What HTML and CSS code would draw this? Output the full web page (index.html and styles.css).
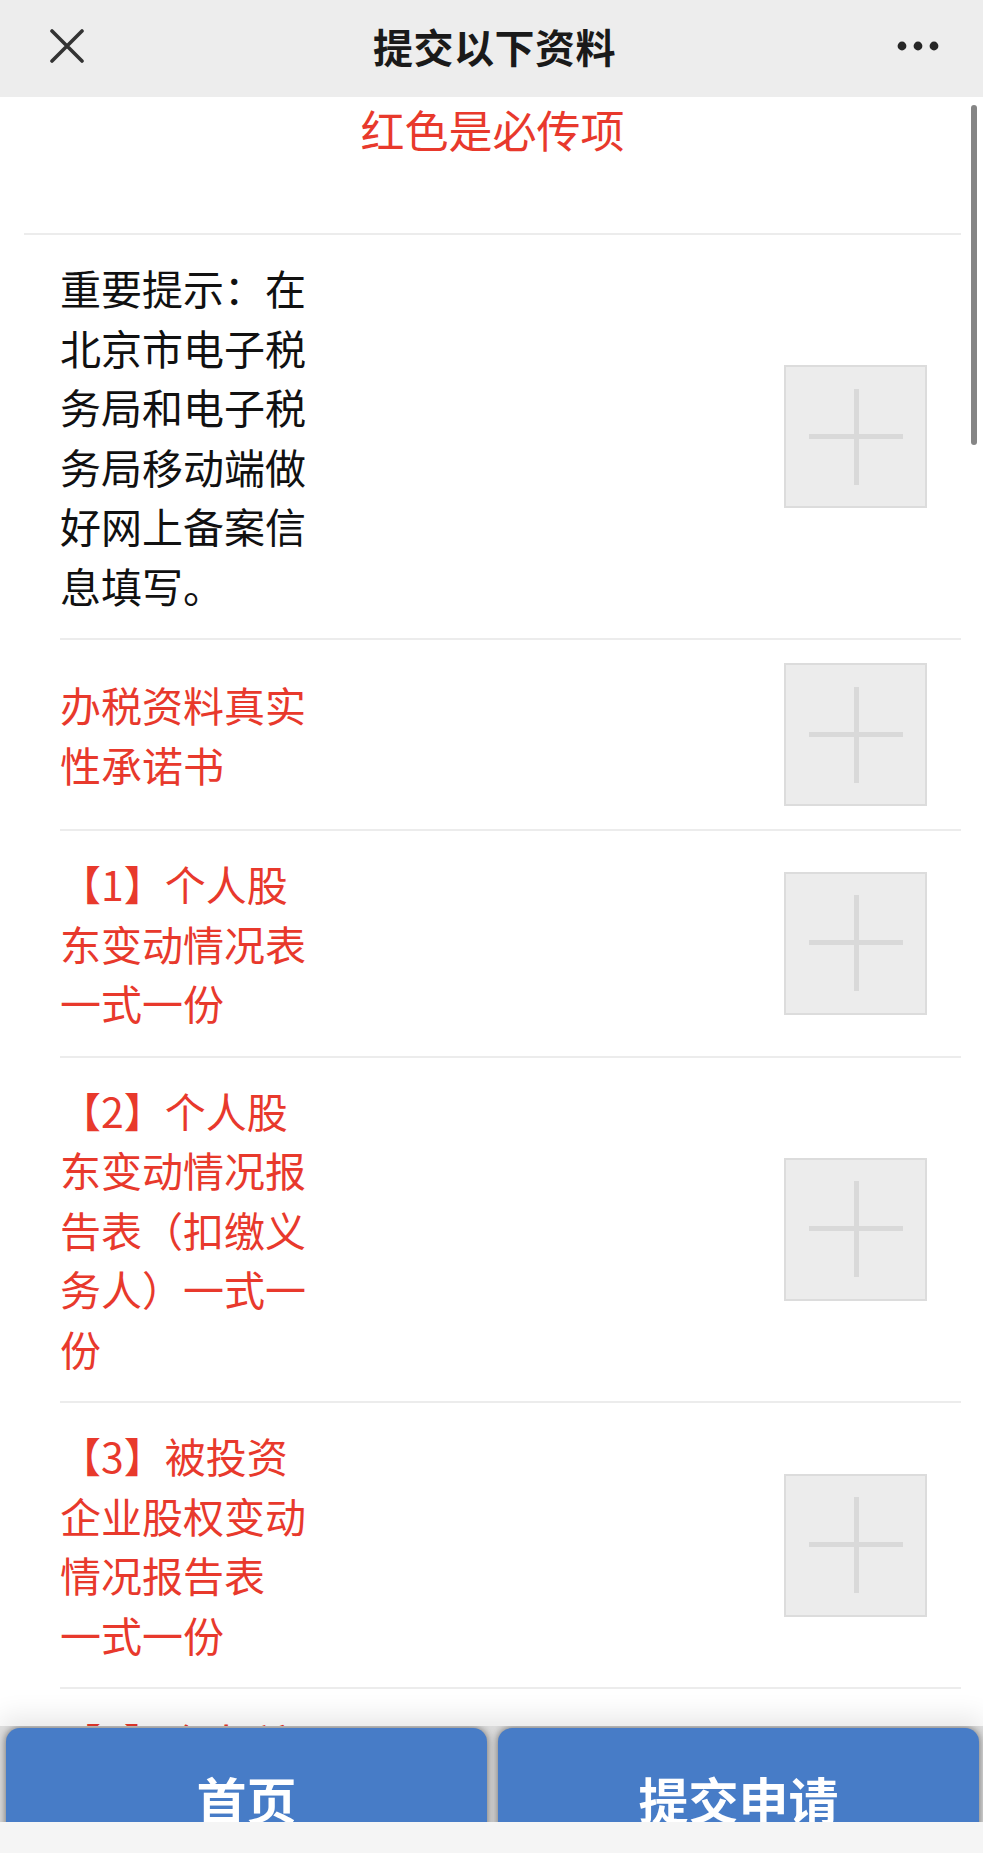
FILE: index.html
```html
<!DOCTYPE html>
<html lang="zh-CN">
<head>
  <meta charset="UTF-8" />
  <meta name="viewport" content="width=device-width, initial-scale=1.0"/>
  <title>提交以下资料</title>
  <link rel="stylesheet" href="styles.css">
</head>
<body>

  <header class="topbar">
    <a class="topbar-close" href="#">
      <svg width="34" height="34" viewBox="0 0 34 34">
        <path d="M2 2 L32 32 M32 2 L2 32" stroke="#333" stroke-width="3.6" stroke-linecap="round" fill="none"/>
      </svg>
    </a>
    <h1 class="topbar-title">提交以下资料</h1>
    <a class="topbar-more" href="#">
      <svg width="42" height="10" viewBox="0 0 42 10">
        <circle cx="5" cy="5" r="4.4" fill="#262626"/>
        <circle cx="21" cy="5" r="4.4" fill="#262626"/>
        <circle cx="37" cy="5" r="4.4" fill="#262626"/>
      </svg>
    </a>
  </header>

  <main class="content">
    <div class="scroll-thumb"></div>
    <div class="page">
      <p class="notice">红色是必传项</p>

      <div class="upload-list">
        <div class="upload-item">
          <div class="upload-label">重要提示：在北京市电子税务局和电子税务局移动端做好网上备案信息填写。</div>
          <div class="upload-box">
            <svg width="94" height="96" viewBox="0 0 94 96"><rect x="0" y="45" width="94" height="5" fill="#d9d9d9"/><rect x="45" y="0" width="5" height="96" fill="#d9d9d9"/></svg>
          </div>
        </div>

        <div class="upload-item">
          <div class="upload-label required">办税资料真实性承诺书</div>
          <div class="upload-box">
            <svg width="94" height="96" viewBox="0 0 94 96"><rect x="0" y="45" width="94" height="5" fill="#d9d9d9"/><rect x="45" y="0" width="5" height="96" fill="#d9d9d9"/></svg>
          </div>
        </div>

        <div class="upload-item">
          <div class="upload-label required">【1】个人股东变动情况表一式一份</div>
          <div class="upload-box">
            <svg width="94" height="96" viewBox="0 0 94 96"><rect x="0" y="45" width="94" height="5" fill="#d9d9d9"/><rect x="45" y="0" width="5" height="96" fill="#d9d9d9"/></svg>
          </div>
        </div>

        <div class="upload-item">
          <div class="upload-label required">【2】个人股东变动情况报告表（扣缴义务人）一式一份</div>
          <div class="upload-box">
            <svg width="94" height="96" viewBox="0 0 94 96"><rect x="0" y="45" width="94" height="5" fill="#d9d9d9"/><rect x="45" y="0" width="5" height="96" fill="#d9d9d9"/></svg>
          </div>
        </div>

        <div class="upload-item">
          <div class="upload-label required">【3】被投资企业股权变动情况报告表<br>一式一份</div>
          <div class="upload-box">
            <svg width="94" height="96" viewBox="0 0 94 96"><rect x="0" y="45" width="94" height="5" fill="#d9d9d9"/><rect x="45" y="0" width="5" height="96" fill="#d9d9d9"/></svg>
          </div>
        </div>

        <div class="upload-item">
          <div class="upload-label required">【4】个人所得税扣缴申报表一式一份</div>
          <div class="upload-box">
            <svg width="94" height="96" viewBox="0 0 94 96"><rect x="0" y="45" width="94" height="5" fill="#d9d9d9"/><rect x="45" y="0" width="5" height="96" fill="#d9d9d9"/></svg>
          </div>
        </div>
      </div>
    </div>
  </main>

  <footer class="bottombar">
    <div class="actions">
      <button class="action-btn">首页</button>
      <button class="action-btn">提交申请</button>
    </div>
    <div class="home-strip"></div>
  </footer>

</body>
</html>
```

FILE: styles.css
```css
html, body {
  height: 100%;
}
body {
  font-family: "Noto Sans CJK SC", "Noto Sans", sans-serif;
  background-color: #fff;
  color: #111;
  margin: 0;
  padding: 0;
  display: flex;
  flex-direction: column;
  overflow: hidden;
}

/* top navigation */
.topbar {
  height: 97px;
  flex-shrink: 0;
  background-color: #ededed;
  display: grid;
  grid-template-columns: 1fr auto 1fr;
  align-items: center;
  padding: 0 44px 6px 50px;
  box-sizing: border-box;
}
.topbar-close {
  justify-self: start;
  display: flex;
}
.topbar-title {
  margin: 0;
  font-size: 40px;
  font-weight: 600;
  color: #1a1a1a;
  letter-spacing: 0.5px;
}
.topbar-more {
  justify-self: end;
  display: flex;
}

/* scrolling area */
.content {
  flex: 1;
  overflow: hidden;
  position: relative;
}
.scroll-thumb {
  position: absolute;
  top: 8px;
  right: 6px;
  width: 6px;
  height: 340px;
  border-radius: 3px;
  background-color: #858585;
}
.page {
  padding: 0 22px 0 24px;
}
.notice {
  margin: 0;
  height: 138px;
  box-sizing: border-box;
  padding-top: 2px;
  text-align: center;
  font-size: 44px;
  line-height: 60px;
  color: #e8392c;
  border-bottom: 2px solid #ececec;
}

.upload-list {
  margin-left: 36px;
}
.upload-item {
  display: flex;
  justify-content: space-between;
  align-items: center;
  padding: 23px 34px 23px 0;
  border-bottom: 2px solid #ececec;
}
.upload-label {
  width: 256px;
  font-size: 41px;
  line-height: 59.5px;
  color: #111;
}
.upload-label.required {
  color: #e8392c;
}
.upload-box {
  width: 143px;
  height: 143px;
  box-sizing: border-box;
  border: 2px solid #dcdcdc;
  background-color: #ececec;
  display: flex;
  align-items: center;
  justify-content: center;
}

/* bottom buttons */
.bottombar {
  flex-shrink: 0;
  position: relative;
  z-index: 2;
  background-color: #dcdcdc;
  box-shadow: 0 -10px 24px rgba(0, 0, 0, 0.09);
}
.actions {
  height: 96px;
  overflow: hidden;
  display: flex;
  gap: 11px;
  padding: 2px 4px 0 6px;
  box-sizing: border-box;
}
.action-btn {
  flex: 1;
  flex-shrink: 0;
  height: 140px;
  border: none;
  border-radius: 14px;
  background-color: #477cc7;
  color: #fff;
  font-family: "Noto Sans CJK SC", "Noto Sans", sans-serif;
  font-size: 50px;
  font-weight: 600;
  box-shadow: 0 0 9px rgba(0, 0, 0, 0.55);
  cursor: pointer;
}
.home-strip {
  height: 31px;
  background-color: #f5f5f5;
}
```
